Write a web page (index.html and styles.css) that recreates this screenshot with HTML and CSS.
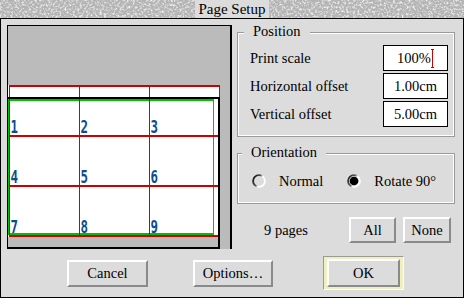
FILE: index.html
```html
<!DOCTYPE html>
<html>
<head>
<meta charset="utf-8">
<title>Page Setup</title>
<link rel="stylesheet" href="styles.css">
</head>
<body>
<div class="window">
  <div class="titlebar"><span class="title">Page Setup</span></div>
  <div class="client">
    <div class="main">
      <svg class="preview" width="225" height="224" viewBox="0 0 225 224">
        <rect x="0" y="0" width="225" height="224" fill="#bbbbbb"/>
        <rect x="1" y="60" width="212" height="152" fill="#ffffff"/>
        <g fill="#00c000">
          <rect x="1" y="74" width="206" height="2"/>
          <rect x="1" y="74" width="1" height="136"/>
          <rect x="206" y="74" width="1" height="136"/>
          <rect x="1" y="208" width="206" height="2"/>
        </g>
        <g fill="#d00000">
          <rect x="2" y="60" width="211" height="2"/>
          <rect x="2" y="110" width="211" height="2"/>
          <rect x="2" y="160" width="211" height="2"/>
          <rect x="2" y="210" width="211" height="2"/>
          <rect x="2" y="60" width="1" height="152"/>
          <rect x="72" y="60" width="1" height="152"/>
          <rect x="142" y="60" width="1" height="152"/>
          <rect x="212" y="60" width="1" height="152"/>
        </g>
        <g fill="#000000">
          <rect x="0" y="72" width="213" height="2"/>
          <rect x="211" y="72" width="2" height="152"/>
          <rect x="0" y="222" width="213" height="2"/>
          <rect x="0" y="0" width="1" height="224"/>
          <rect x="0" y="0" width="225" height="1"/>
          <rect x="223" y="0" width="2" height="224"/>
        </g>
        <g class="num">
          <text x="3.5" y="108" textLength="7.5" lengthAdjust="spacingAndGlyphs">1</text>
          <text x="73.5" y="108" textLength="7.5" lengthAdjust="spacingAndGlyphs">2</text>
          <text x="143.5" y="108" textLength="7.5" lengthAdjust="spacingAndGlyphs">3</text>
          <text x="3.5" y="158" textLength="7.5" lengthAdjust="spacingAndGlyphs">4</text>
          <text x="73.5" y="158" textLength="7.5" lengthAdjust="spacingAndGlyphs">5</text>
          <text x="143.5" y="158" textLength="7.5" lengthAdjust="spacingAndGlyphs">6</text>
          <text x="3.5" y="207.5" textLength="7.5" lengthAdjust="spacingAndGlyphs">7</text>
          <text x="73.5" y="207.5" textLength="7.5" lengthAdjust="spacingAndGlyphs">8</text>
          <text x="143.5" y="207.5" textLength="7.5" lengthAdjust="spacingAndGlyphs">9</text>
        </g>
      </svg>
      <div class="side">
        <div class="group group-position">
          <span class="group-label">Position</span>
          <div class="field">
            <span class="field-label">Print scale</span>
            <span class="writable">100%<svg class="caret" width="3" height="19" viewBox="0 0 3 19"><path d="M1.5 0V19M0 0.5H3M0 18.5H3" stroke="#d00000" stroke-width="1" fill="none"/></svg></span>
          </div>
          <div class="field">
            <span class="field-label">Horizontal offset</span>
            <span class="writable">1.00cm</span>
          </div>
          <div class="field">
            <span class="field-label">Vertical offset</span>
            <span class="writable">5.00cm</span>
          </div>
        </div>
        <div class="group group-orient">
          <span class="group-label group-label-orient">Orientation</span>
          <div class="radios">
            <span class="radio-item">
              <svg class="radio" width="14" height="14" viewBox="0 0 14 14">
                <defs>
                  <linearGradient id="ring1" x1="0" y1="0.25" x2="1" y2="0.75">
                    <stop offset="0" stop-color="#111111"/>
                    <stop offset="0.42" stop-color="#555555"/>
                    <stop offset="0.6" stop-color="#ffffff"/>
                    <stop offset="1" stop-color="#ffffff"/>
                  </linearGradient>
                </defs>
                <circle cx="7" cy="7" r="5.9" fill="#dcdcdc" stroke="url(#ring1)" stroke-width="1.8"/>
              </svg>
              <span class="radio-text">Normal</span>
            </span>
            <span class="radio-item radio-item-2">
              <svg class="radio" width="14" height="14" viewBox="0 0 14 14">
                <defs>
                  <linearGradient id="ring2" x1="0" y1="0.25" x2="1" y2="0.75">
                    <stop offset="0" stop-color="#222222"/>
                    <stop offset="0.42" stop-color="#666666"/>
                    <stop offset="0.6" stop-color="#ffffff"/>
                    <stop offset="1" stop-color="#ffffff"/>
                  </linearGradient>
                </defs>
                <circle cx="7" cy="7" r="5.9" fill="#dcdcdc" stroke="url(#ring2)" stroke-width="1.8"/>
                <circle cx="7" cy="7" r="4.3" fill="#000000"/>
              </svg>
              <span class="radio-text">Rotate 90°</span>
            </span>
          </div>
        </div>
        <div class="pages-row">
          <span class="pages-text">9 pages</span>
          <button class="btn btn-all">All</button>
          <button class="btn btn-none">None</button>
        </div>
      </div>
    </div>
    <div class="footer">
      <button class="btn btn-cancel">Cancel</button>
      <button class="btn btn-options">Options…</button>
      <span class="default-ring"><button class="btn btn-ok">OK</button></span>
    </div>
  </div>
</div>
</body>
</html>
```
FILE: styles.css
```css
* {
  box-sizing: border-box;
}

html,
body {
  margin: 0;
  padding: 0;
}

body {
  width: 464px;
  height: 298px;
  overflow: hidden;
  background: #dcdcdc;
  font-family: "Liberation Serif", "Times New Roman", serif;
  font-size: 14.5px;
  color: #000;
}

.window {
  width: 464px;
  height: 298px;
  display: flex;
  flex-direction: column;
}

.titlebar {
  flex: none;
  height: 19px;
  border-bottom: 1px solid #000;
  display: flex;
  justify-content: center;
  background-color: #b6b6b6;
  background-image: url("data:image/svg+xml,%3Csvg xmlns='http://www.w3.org/2000/svg' width='464' height='18'%3E%3Cfilter id='n' x='0' y='0' width='100%25' height='100%25'%3E%3CfeTurbulence type='fractalNoise' baseFrequency='0.45' numOctaves='3' seed='7'/%3E%3CfeColorMatrix values='0 0 0 0 0.86 0 0 0 0 0.86 0 0 0 0 0.86 3 0 0 0 -1.35'/%3E%3C/filter%3E%3Crect width='464' height='18' fill='%23b4b4b4'/%3E%3Crect width='464' height='18' filter='url(%23n)'/%3E%3C/svg%3E");
  background-repeat: no-repeat;
}

.title {
  font-size: 15px;
  line-height: 18px;
  height: 18px;
  padding: 0 3px;
  background: #dcdcdc;
}

.client {
  flex: 1;
  border: 1px solid #000;
  border-top: 0;
  background: #dcdcdc;
  padding: 6px 7px 0 6px;
  display: flex;
  flex-direction: column;
}

.main {
  display: flex;
  gap: 5px;
  height: 224px;
}

.preview {
  display: block;
  flex: none;
}

.num {
  font-family: "DejaVu Sans Mono", monospace;
  font-weight: bold;
  font-size: 17.5px;
  fill: #0b4c8e;
}

.side {
  width: 218px;
  flex: none;
  display: flex;
  flex-direction: column;
}

.group {
  position: relative;
  border: 1px solid #9a9a9a;
  box-shadow: inset 0 0 0 1px #ffffff;
}

.group-label {
  position: absolute;
  top: -10px;
  left: 6px;
  padding: 0 9px;
  line-height: 16px;
  height: 16px;
  background: #dcdcdc;
}

.group-label-orient {
  left: 4px;
}

.group-position {
  margin-top: 7px;
  height: 105px;
  padding: 12px 6px 0 12px;
  display: flex;
  flex-direction: column;
  gap: 2px;
}

.field {
  height: 26px;
  display: flex;
  align-items: center;
  justify-content: space-between;
}

.writable {
  width: 65px;
  height: 26px;
  border: 1px solid #000;
  background: #fff;
  display: flex;
  align-items: center;
  justify-content: center;
}

.caret {
  display: block;
  margin-left: 0;
}

.group-orient {
  margin-top: 16px;
  height: 51px;
  padding: 20px 0 0 14px;
}

.radios {
  display: flex;
  align-items: center;
  height: 14px;
}

.radio-item {
  display: flex;
  align-items: center;
}

.radio-item-2 {
  margin-left: 24px;
}

.radio {
  display: block;
  flex: none;
  margin-right: 13px;
}

.radio-text {
  line-height: 14px;
  white-space: nowrap;
}

.pages-row {
  margin-top: 13px;
  height: 26px;
  display: flex;
  align-items: center;
}

.pages-text {
  margin-left: 27px;
  width: 85px;
}

.btn {
  font-family: "Liberation Serif", "Times New Roman", serif;
  font-size: 14.5px;
  color: #000;
  background: #dcdcdc;
  border: 2px solid;
  border-color: #ffffff #8a8a8a #8a8a8a #ffffff;
  padding: 0;
  margin: 0;
  line-height: 16px;
}

.btn-all {
  width: 47px;
  height: 26px;
}

.btn-none {
  width: 48px;
  height: 26px;
  margin-left: 7px;
}

.footer {
  margin-top: 7px;
  height: 34px;
  display: flex;
  align-items: center;
  padding-left: 60px;
}

.btn-cancel {
  width: 81px;
  height: 27px;
}

.btn-options {
  width: 80px;
  height: 27px;
  margin-left: 45px;
}

.default-ring {
  margin-left: 50px;
  width: 81px;
  height: 34px;
  display: flex;
  border: 1px solid;
  border-color: #9a9a9a #ffffff #ffffff #9a9a9a;
  background: #f0efc2;
  padding: 2px 3px;
}

.btn-ok {
  width: 73px;
  height: 28px;
}
```
